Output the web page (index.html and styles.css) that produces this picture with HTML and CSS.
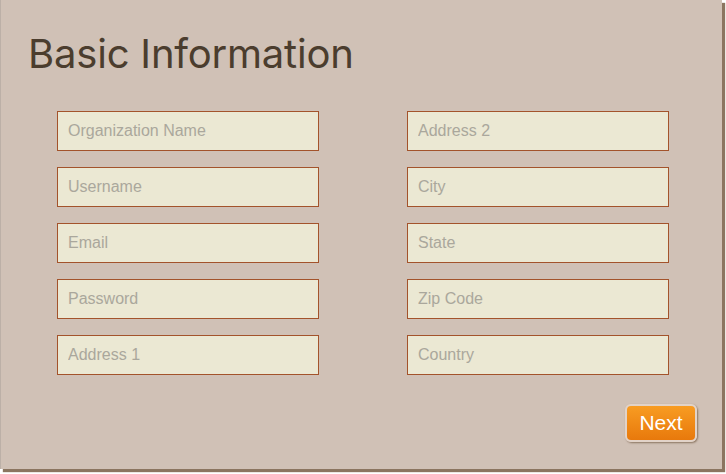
FILE: index.html
```html
<!DOCTYPE html>
<html>
<head>
<meta charset="utf-8">
<link rel="stylesheet" href="styles.css">
</head>
<body>
<div class="card">
  <h1 class="title">Basic Information</h1>
  <form class="fields">
    <div class="col">
      <input class="field" placeholder="Organization Name">
      <input class="field" placeholder="Username">
      <input class="field" placeholder="Email">
      <input class="field" placeholder="Password">
      <input class="field" placeholder="Address 1">
    </div>
    <div class="col">
      <input class="field" placeholder="Address 2">
      <input class="field" placeholder="City">
      <input class="field" placeholder="State">
      <input class="field" placeholder="Zip Code">
      <input class="field" placeholder="Country">
    </div>
  </form>
  <div class="actions">
    <button class="next" type="button">Next</button>
  </div>
</div>
</body>
</html>
```

FILE: styles.css
```css
html, body {
  margin: 0;
  padding: 0;
  background: #ffffff;
}
body {
  padding-bottom: 5px;
}
.card {
  box-sizing: border-box;
  width: 722px;
  height: 469px;
  background: #d0c1b6;
  border-left: 1px solid #bcb0a7;
  box-shadow: 3px 3px 1px #8b7560;
  padding: 29px 0 0 0;
  display: flex;
  flex-direction: column;
}
.title {
  margin: 0 0 0 27px;
  font-family: "Inter", "Liberation Sans", sans-serif;
  font-weight: 400;
  font-size: 40px;
  line-height: 50px;
  color: #4b3d2e;
  letter-spacing: -0.2px;
}
.fields {
  display: flex;
  gap: 88px;
  margin: 32px 0 0 56px;
}
.col {
  display: flex;
  flex-direction: column;
  gap: 16px;
}
.field {
  box-sizing: border-box;
  width: 262px;
  height: 40px;
  margin: 0;
  padding: 0 10px;
  background: #ebe8d3;
  border: 1px solid #a3532b;
  border-radius: 0;
  font-family: "Liberation Sans", Arial, sans-serif;
  font-size: 16px;
  color: #333;
  outline: none;
}
.field::placeholder {
  color: #aaa79c;
}
.actions {
  display: flex;
  justify-content: flex-end;
  margin: 29px 25px 0 0;
}
.next {
  box-sizing: border-box;
  width: 72px;
  height: 38px;
  border: 2px solid #e2d3c8;
  border-radius: 6px;
  background: linear-gradient(#f89c22, #e8790c);
  color: #ffffff;
  font-family: "Liberation Sans", Arial, sans-serif;
  font-size: 21px;
  padding: 0;
  box-shadow: 1px 1px 2px #8b7560;
}
```
